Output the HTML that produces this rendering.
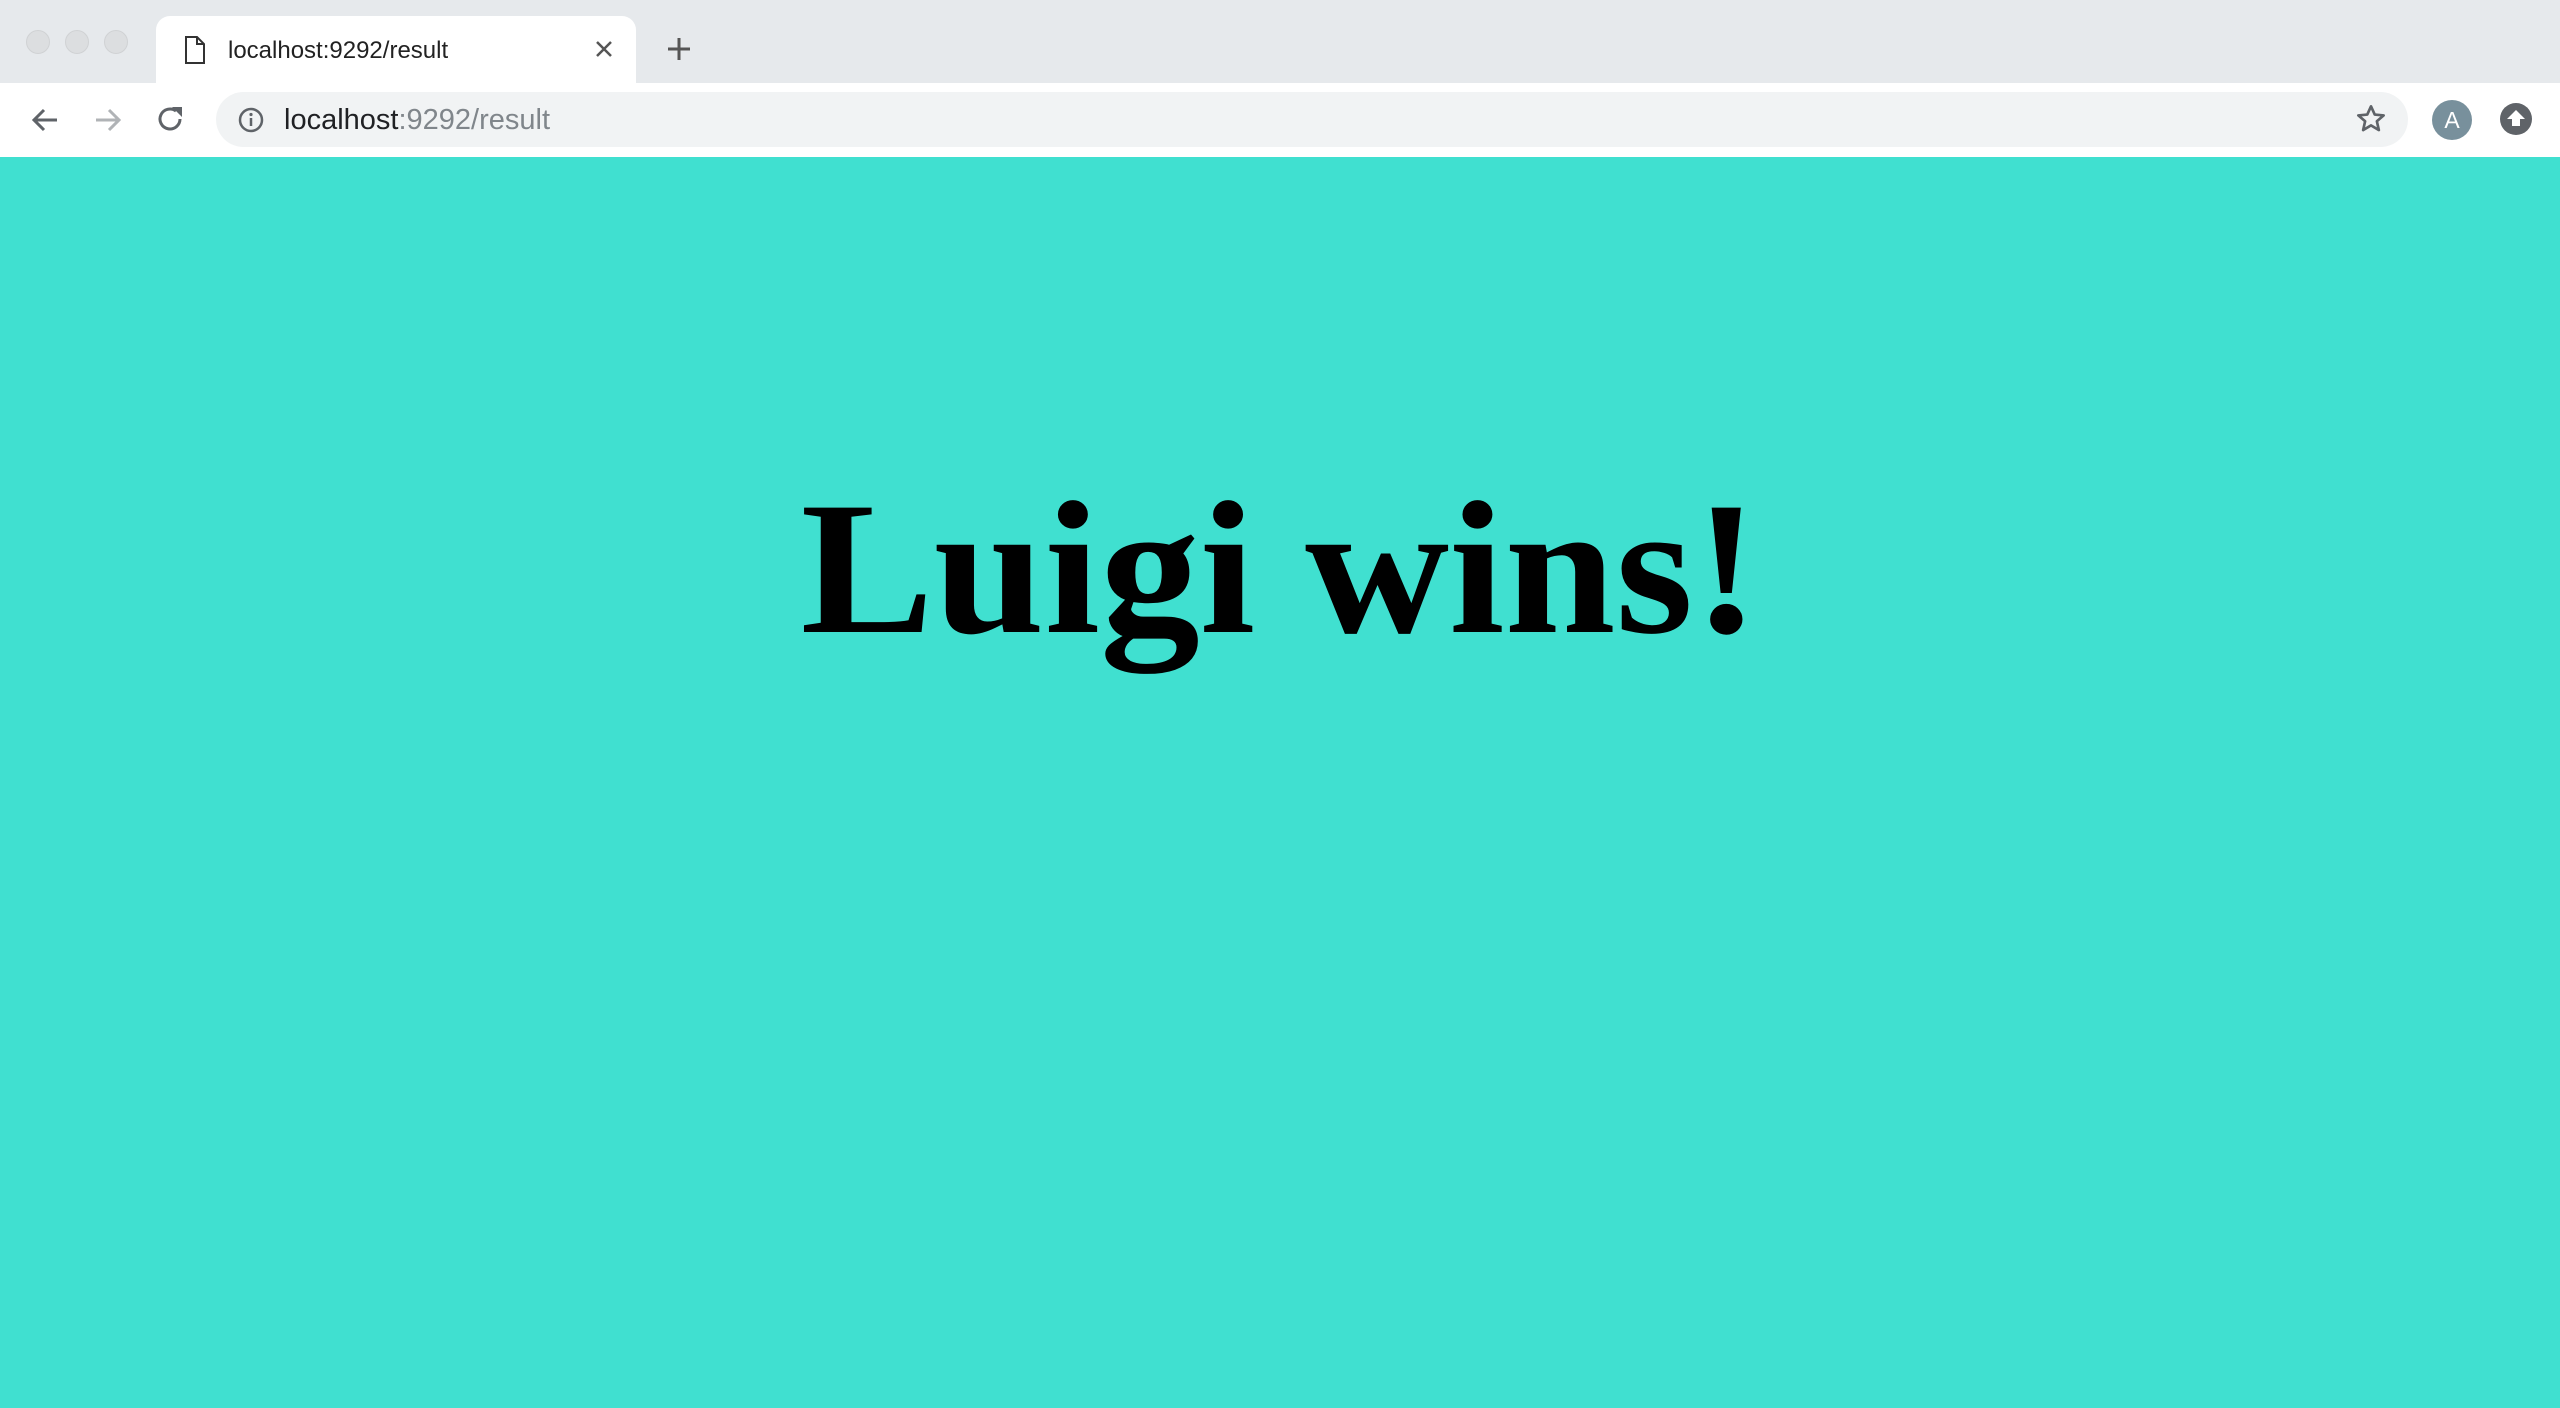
<!DOCTYPE html>
<html><head><meta charset="utf-8"><style>
html,body{margin:0;padding:0;width:2560px;height:1408px;overflow:hidden;background:#40e0d0;font-family:"Liberation Sans",sans-serif}
#strip{position:absolute;left:0;top:0;width:2560px;height:83px;background:#e6e9ec}
.dot{position:absolute;top:30px;width:24px;height:24px;border-radius:50%;background:#dcdee0;border:1px solid #d0d2d4;box-sizing:border-box}
#tab{position:absolute;left:156px;top:16px;width:480px;height:70px;background:#fff;border-radius:14px 14px 0 0}
#toolbar{position:absolute;left:0;top:83px;width:2560px;height:74px;background:#fff}
#url{position:absolute;left:216px;top:92px;width:2192px;height:55px;background:#f1f3f4;border-radius:28px}
.t{position:absolute;white-space:nowrap}
h1{position:absolute;left:0;width:2560px;top:474px;margin:0;text-align:center;font-family:"Liberation Serif",serif;font-weight:bold;font-size:190px;line-height:1;color:#000;transform:scaleX(1.05);transform-origin:1278px 0}
</style></head><body>
<div id="strip"></div>
<div class="dot" style="left:26px"></div>
<div class="dot" style="left:65px"></div>
<div class="dot" style="left:104px"></div>
<div id="tab"></div>
<svg class="t" style="left:184px;top:35px" width="22" height="30" viewBox="0 0 22 30"><path d="M2 2h11l7 7v19H2z M13 2v7h7" fill="none" stroke="#333" stroke-width="2"/></svg>
<div class="t" style="left:228px;top:37px;font-size:24px;color:#222">localhost:9292/result</div>
<svg class="t" style="left:594px;top:39px" width="20" height="20"><path d="M3 3L17 17M17 3L3 17" stroke="#555" stroke-width="2.5"/></svg>
<svg class="t" style="left:666px;top:36px" width="26" height="26"><path d="M13 2V24M2 13H24" stroke="#555" stroke-width="3"/></svg>
<div id="toolbar"></div>
<svg class="t" style="left:30px;top:105px" width="30" height="30"><path d="M27 15H4M14 5L4 15L14 25" fill="none" stroke="#5f6368" stroke-width="3"/></svg>
<svg class="t" style="left:93px;top:105px" width="30" height="30"><path d="M3 15H26M16 5L26 15L16 25" fill="none" stroke="#b0b3b6" stroke-width="3"/></svg>
<svg class="t" style="left:156px;top:104px" width="30" height="30"><path d="M24 15A10 10 0 1 1 20 7" fill="none" stroke="#5f6368" stroke-width="3"/><path d="M16 3H26V13Z" fill="#5f6368"/></svg>
<div id="url"></div>
<svg class="t" style="left:238px;top:107px" width="26" height="26"><circle cx="13" cy="13" r="11" fill="none" stroke="#5f6368" stroke-width="2.5"/><path d="M13 11V19" stroke="#5f6368" stroke-width="2.5"/><circle cx="13" cy="7.5" r="1.6" fill="#5f6368"/></svg>
<div class="t" style="left:284px;top:104px;font-size:29px;color:#202124">localhost<span style="color:#80868b">:9292/result</span></div>
<svg class="t" style="left:2355px;top:103px" width="32" height="32" viewBox="0 0 24 24"><path d="M12 2.5l2.8 6.2 6.7.6-5.1 4.4 1.5 6.6L12 16.8l-5.9 3.5 1.5-6.6-5.1-4.4 6.7-.6z" fill="none" stroke="#5f6368" stroke-width="2" stroke-linejoin="round"/></svg>
<div class="t" style="left:2432px;top:100px;width:40px;height:40px;border-radius:50%;background:#78909c;color:#fff;font-size:23px;line-height:40px;text-align:center">A</div>
<svg class="t" style="left:2500px;top:103px" width="32" height="32"><circle cx="16" cy="16" r="16" fill="#5f6368"/><path d="M16 7L25 16H20V23H12V16H7Z" fill="#fff"/></svg>
<h1>Luigi wins!</h1>
</body></html>
